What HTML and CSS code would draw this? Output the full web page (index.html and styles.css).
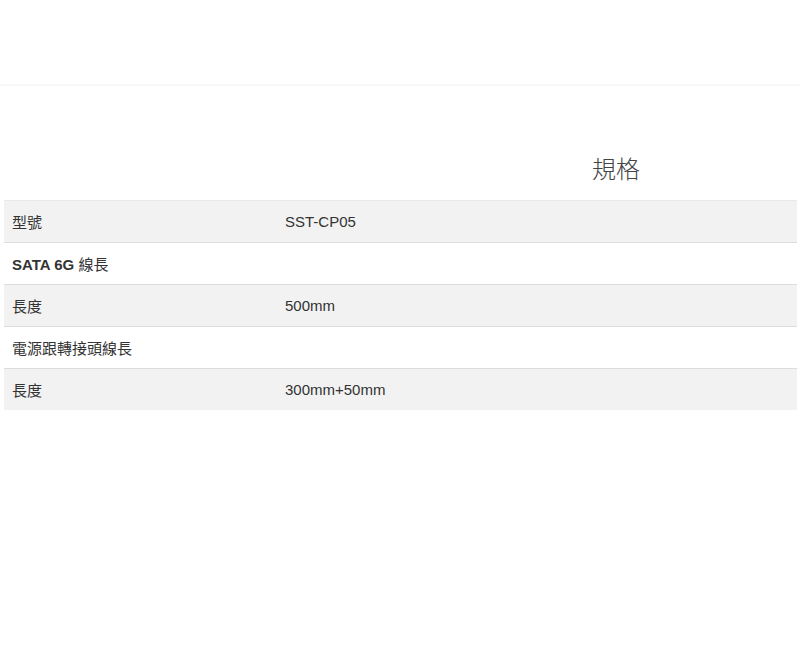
FILE: index.html
```html
<!DOCTYPE html>
<html lang="zh-Hant">
<head>
    <meta charset="UTF-8">
    <meta name="viewport" content="width=device-width, initial-scale=1.0">
    <title>規格</title>
    <link rel="stylesheet" href="styles.css">
</head>
<body>
    <div class="topBar"></div>

    <div class="specs">
        <h2 class="specsTitle">規格</h2>
        <table class="specTable">
            <tr class="odd">
                <td class="label">型號</td>
                <td>SST-CP05</td>
            </tr>
            <tr>
                <td class="label" colspan="2"><strong>SATA 6G</strong> 線長</td>
            </tr>
            <tr class="odd">
                <td class="label">長度</td>
                <td>500mm</td>
            </tr>
            <tr>
                <td class="label" colspan="2">電源跟轉接頭線長</td>
            </tr>
            <tr class="odd">
                <td class="label">長度</td>
                <td>300mm+50mm</td>
            </tr>
        </table>
    </div>
</body>
</html>
```

FILE: styles.css
```css
body {
    font-family: "Liberation Sans", Arial, "Noto Sans CJK TC", sans-serif;
    background-color: #fff;
    color: #333;
    margin: 0;
    padding: 0;
}

.topBar {
    height: 84px;
    border-bottom: 2px solid #f7f7f7;
}

.specs {
    padding: 0 3px 0 4px;
}

.specsTitle {
    margin: 0;
    padding: 69px 0 0 588px;
    height: 45px;
    font-size: 24px;
    font-weight: 300;
    line-height: 30px;
    color: #444;
}

.specTable {
    width: 100%;
    border-collapse: collapse;
    font-size: 15px;
    border-top: 1px solid #e8e8e8;
}

.specTable td {
    height: 41px;
    padding: 0 8px;
    border-top: 1px solid #ddd;
    vertical-align: middle;
}

.specTable tr:first-child td {
    border-top: none;
}

.specTable .label {
    width: 257px;
}

.specTable tr.odd {
    background-color: #f2f2f2;
}

.specTable strong {
    font-weight: bold;
}
```
